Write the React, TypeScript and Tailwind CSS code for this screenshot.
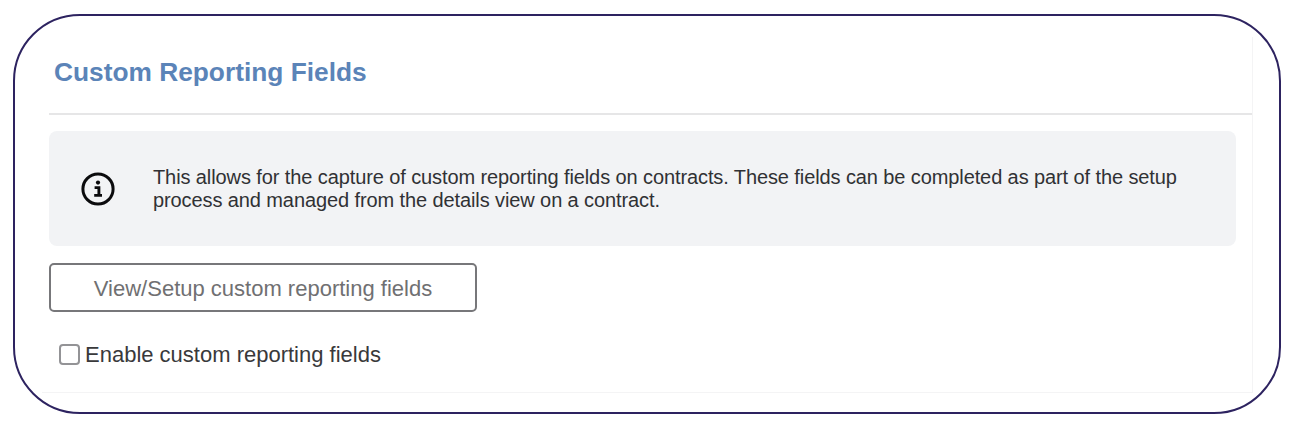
import { useState } from "react";

function InfoIcon() {
    return (
        <svg viewBox="0 0 34 34" className="w-[34px] h-[34px] flex-shrink-0" fill="none">
            <circle cx="17" cy="17" r="15.1" stroke="#0b0b0d" strokeWidth="3" />
            <circle cx="17" cy="10.6" r="2.1" fill="#0b0b0d" />
            <path d="M13.6 15.6H17.9V23.6M13.2 23.4H21" stroke="#0b0b0d" strokeWidth="2.9" />
        </svg>
    );
}

export default function App() {
    const [enabled, setEnabled] = useState(false);

    return (
        <div className="h-[434px] bg-white pt-[14px] pl-[13px] font-['Liberation_Sans',Arial,sans-serif]">
            <div className="w-[1268px] h-[400px] rounded-[67px] border-2 border-[#2d2360] pt-[21px] pl-[27px]">
                <section className="w-[1211px] h-[356px] border-r border-b border-[#f4f4f5] pl-[7px]">
                    <h1 className="h-[76px] pt-[19px] pl-[5px] text-[26.3px] leading-[32px] font-bold text-[#5b84b8] whitespace-nowrap">
                        Custom Reporting Fields
                    </h1>
                    <hr className="border-t-2 border-[#e6e6e7]" />

                    <div className="mt-[16px] w-[1187px] h-[115px] rounded-lg bg-[#f2f3f5] flex items-center pl-[32px] gap-[38px]">
                        <InfoIcon />
                        <p className="text-[20px] leading-[23px] tracking-[-0.1px] text-[#303134] whitespace-nowrap">
                            This allows for the capture of custom reporting fields on contracts. These fields can be completed as part of the setup
                            <br />
                            process and managed from the details view on a contract.
                        </p>
                    </div>

                    <button
                        type="button"
                        className="mt-[17px] w-[428px] h-[49px] pt-[2px] rounded-[5px] border-2 border-[#77777a] bg-white text-[22px] text-[#707072] flex items-center justify-center whitespace-nowrap"
                    >
                        View/Setup custom reporting fields
                    </button>

                    <label className="mt-[29px] pl-[10px] flex items-center gap-[5px] text-[22px] leading-[26px] text-[#39393b] whitespace-nowrap">
                        <input
                            type="checkbox"
                            checked={enabled}
                            onChange={(e) => setEnabled(e.target.checked)}
                            className="appearance-none w-[21px] h-[21px] rounded-[4px] border-2 border-[#939396] bg-white checked:bg-[#5b84b8]"
                        />
                        <span className="pt-px">Enable custom reporting fields</span>
                    </label>
                </section>
            </div>
        </div>
    );
}
